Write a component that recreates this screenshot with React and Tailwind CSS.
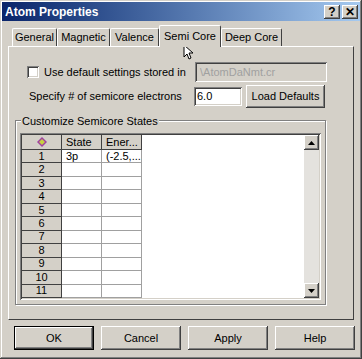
import React from "react";

const raised =
  "shadow-[inset_-1px_-1px_#404040,inset_1px_1px_#ffffff,inset_-2px_-2px_#808080,inset_2px_2px_#d4d0c8]";
const sunken =
  "shadow-[inset_1px_1px_#808080,inset_-1px_-1px_#ffffff,inset_2px_2px_#404040,inset_-2px_-2px_#d4d0c8]";

const tabs = [
  { t: "General", w: "w-[45px]" },
  { t: "Magnetic", w: "w-[53px]" },
  { t: "Valence", w: "w-[49px]" },
  { t: "Semi Core", w: "w-[62px]" },
  { t: "Deep Core", w: "w-[61px]" },
];
const rows = [1, 2, 3, 4, 5, 6, 7, 8, 9, 10, 11];

const Arrow = ({ up }) => (
  <svg width="7" height="4" viewBox="0 0 7 4">
    <polygon points={up ? "3.5,0 7,4 0,4" : "0,0 7,0 3.5,4"} fill="#000" />
  </svg>
);

const App = () => {
  return (
    <div
      className="relative w-[362px] h-[359px] bg-[#d4d0c8] p-[2px] text-[11px] text-black whitespace-nowrap shadow-[inset_-1px_-1px_#404040,inset_1px_1px_#d4d0c8,inset_-2px_-2px_#808080,inset_2px_2px_#ffffff]"
      style={{ fontFamily: '"Liberation Sans", Arial, sans-serif' }}
    >
      {/* title bar */}
      <div className="flex items-center h-[19px] pl-[3px] pr-[2px] bg-gradient-to-r from-[#0a246a] to-[#a6caf0]">
        <span className="text-white font-bold text-[12px] flex-1">Atom Properties</span>
        <div className="flex gap-[2px]">
          <div className={`w-[16px] h-[14px] bg-[#d4d0c8] flex items-center justify-center font-bold text-[12px] leading-none ${raised}`}>?</div>
          <div className={`w-[16px] h-[14px] bg-[#d4d0c8] flex items-center justify-center font-bold text-[12px] leading-none ${raised}`}>✕</div>
        </div>
      </div>

      {/* tabs */}
      <div className="flex items-end h-[25px] pl-[10px] pt-[4px]">
        {tabs.map(({ t, w }) => {
          const sel = t === "Semi Core";
          return (
            <div
              key={t}
              className={
                sel
                  ? `relative z-10 -mb-[1px] h-[22px] ${w} flex items-center justify-center bg-[#d4d0c8] border-t border-l border-white border-r border-r-[#404040] rounded-t-[2px] text-[11px]`
                  : `h-[18px] ${w} flex items-center justify-center border-t border-l border-white border-r border-r-[#404040] rounded-t-[2px] text-[11px]`
              }
            >
              {t}
            </div>
          );
        })}
      </div>

      {/* tab panel */}
      <div className="mx-[6px] h-[274px] border-t border-l border-white border-r border-b border-r-[#404040] border-b-[#404040] px-[6px] pt-[15px] flex flex-col">
        <div className="flex items-center h-[20px] pl-[12px]">
          <div className={`w-[12px] h-[12px] bg-white ${sunken}`} />
          <span className="ml-[5px] flex-1">Use default settings stored in</span>
          <div className={`w-[132px] h-[20px] mr-[20px] flex items-center px-[5px] text-[#a0a0a0] ${sunken}`}>
            \AtomDaNmt.cr
          </div>
        </div>
        <div className="flex items-center h-[23px] mt-[3px] pl-[14px]">
          <span className="flex-1">Specify # of semicore electrons</span>
          <div className={`w-[48px] h-[19px] bg-white flex items-center px-[3px] ${sunken}`}>6.0</div>
          <div className={`ml-[4px] mr-[22px] w-[79px] h-[23px] flex items-center justify-center ${raised}`}>
            Load Defaults
          </div>
        </div>

        {/* group box */}
        <div className="relative mt-[12px] mr-[21px] h-[185px] border border-[#808080] shadow-[1px_1px_#ffffff,inset_1px_1px_#ffffff] px-[4px] pt-[12px]">
          <span className="absolute -top-[8px] left-[5px] px-[1px] bg-[#d4d0c8]">
            Customize Semicore States
          </span>
          <div className={`flex h-[167px] bg-white p-[2px] ${sunken}`}>
            <div className="flex-1 flex flex-col">
              <div className="flex h-[15px] bg-[#d4d0c8]">
                <div className="w-[40px] border-r border-b border-[#404040] flex items-center justify-center">
                  <svg width="10" height="10" viewBox="0 0 10 10">
                    <polygon points="5,0 10,5 5,10 0,5" fill="#a040a0" />
                    <polygon points="5,2 8,5 5,8 2,5" fill="#c8d040" />
                  </svg>
                </div>
                <div className="w-[40px] border-r border-b border-[#404040] pl-[4px] flex items-center">State</div>
                <div className="w-[40px] border-r border-b border-[#404040] pl-[4px] flex items-center">Ener...</div>
                <div className="flex-1 bg-white" />
              </div>
              {rows.map((r) => (
                <div key={r} className="flex h-[13.5px]">
                  <div className="w-[40px] bg-[#d4d0c8] border-r border-b border-[#404040] flex items-center justify-center leading-none">
                    {r}
                  </div>
                  <div className="w-[40px] border-r border-b border-[#a0a0a0] pl-[4px] flex items-center leading-none">
                    {r === 1 ? "3p" : ""}
                  </div>
                  <div className="w-[40px] border-r border-b border-[#a0a0a0] pl-[4px] flex items-center leading-none">
                    {r === 1 ? "(-2.5,..." : ""}
                  </div>
                  <div className="flex-1" />
                </div>
              ))}
            </div>
            {/* scrollbar */}
            <div className="w-[15px] flex flex-col bg-[#e4e2de]">
              <div className={`h-[15px] bg-[#d4d0c8] flex items-center justify-center ${raised}`}>
                <Arrow up />
              </div>
              <div className="flex-1" />
              <div className={`h-[15px] bg-[#d4d0c8] flex items-center justify-center ${raised}`}>
                <Arrow />
              </div>
            </div>
          </div>
        </div>
      </div>

      {/* buttons */}
      <div className="flex gap-[7px] pl-[12px] mt-[6px]">
        <div className="w-[80px] h-[24px] border border-black">
          <div className={`w-full h-full flex items-center justify-center ${raised}`}>OK</div>
        </div>
        {["Cancel", "Apply", "Help"].map((b) => (
          <div key={b} className={`w-[80px] h-[24px] flex items-center justify-center ${raised}`}>
            {b}
          </div>
        ))}
      </div>

      {/* mouse pointer over the tab */}
      <svg className="absolute left-[183px] top-[44px]" width="12" height="16" viewBox="0 0 12 16">
        <polygon points="1,1 1,13 4,10 6,15 8,14 6,9 10,9" fill="#fff" stroke="#000" strokeWidth="1" />
      </svg>
    </div>
  );
};

export default App;
